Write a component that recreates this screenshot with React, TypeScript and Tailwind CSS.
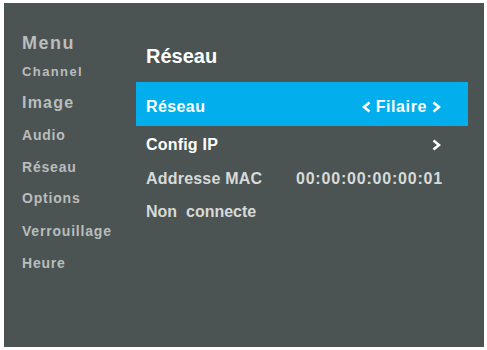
import React from 'react';

const font = { fontFamily: '"Liberation Sans", Arial, sans-serif' };

const menuItems = [
  { label: 'Menu', cls: 'h-[30px] text-[18px] tracking-[1.5px]' },
  { label: 'Channel', cls: 'h-[27px] text-[13px] tracking-[1.4px]' },
  { label: 'Image', cls: 'h-[35px] text-[16px] tracking-[1.2px]' },
  { label: 'Audio', cls: 'h-[30px] text-[14px] tracking-[0.8px]' },
  { label: 'Réseau', cls: 'h-[34px] text-[14px] tracking-[0.8px]' },
  { label: 'Options', cls: 'h-[27px] text-[14px] tracking-[0.8px]' },
  { label: 'Verrouillage', cls: 'h-[40px] text-[14px] tracking-[0.8px]' },
  { label: 'Heure', cls: 'h-[24px] text-[14px] tracking-[0.8px]' },
];

const Chevron: React.FC<{ dir: 'left' | 'right' }> = ({ dir }) => (
  <svg width="9" height="12" viewBox="0 0 9 12" className="shrink-0">
    <polyline
      points={dir === 'right' ? '1.5,1.5 7,6 1.5,10.5' : '7.5,1.5 2,6 7.5,10.5'}
      fill="none"
      stroke="currentColor"
      strokeWidth="2.6"
      strokeLinejoin="miter"
    />
  </svg>
);

export default function App() {
  return (
    <div className="w-[487px] h-[350px] bg-white pt-[3px] pl-[4px] pr-[3px] pb-[3px]" style={font}>
      <div className="w-full h-full bg-[#4b5452] flex">
        {/* left menu */}
        <div className="w-[132px] pl-[18px] pt-[25px] flex flex-col text-[#b9bdbd] font-bold">
          {menuItems.map((m) => (
            <div key={m.label} className={`flex items-center leading-none ${m.cls}`}>
              {m.label}
            </div>
          ))}
        </div>

        {/* right panel */}
        <div className="w-[332px] pt-[37px] flex flex-col font-bold">
          <div className="h-[31px] flex items-center pl-[10px] text-white text-[20px] leading-none">
            Réseau
          </div>
          <div className="mt-[11px] h-[44px] bg-[#03aeec] flex items-center justify-between pl-[10px] pr-[27px] pt-[5px] text-white text-[16px] leading-none">
            <span className="tracking-[0.4px]">Réseau</span>
            <span className="flex items-center gap-[5px] tracking-[0.6px]">
              <Chevron dir="left" />
              Filaire
              <Chevron dir="right" />
            </span>
          </div>
          <div className="h-[37px] flex items-center justify-between pl-[10px] pr-[27px] text-white text-[16px] leading-none">
            <span className="tracking-[0.2px]">Config IP</span>
            <Chevron dir="right" />
          </div>
          <div className="h-[31px] flex items-center justify-between pl-[10px] pr-[25px] text-[#d8dada] text-[16px] leading-none">
            <span className="tracking-[0.2px]">Addresse MAC</span>
            <span className="tracking-[0.8px]">00:00:00:00:00:01</span>
          </div>
          <div className="h-[35px] flex items-center pl-[10px] text-[#d8dada] text-[16px] leading-none whitespace-pre">
            Non  connecte
          </div>
        </div>
      </div>
    </div>
  );
}
